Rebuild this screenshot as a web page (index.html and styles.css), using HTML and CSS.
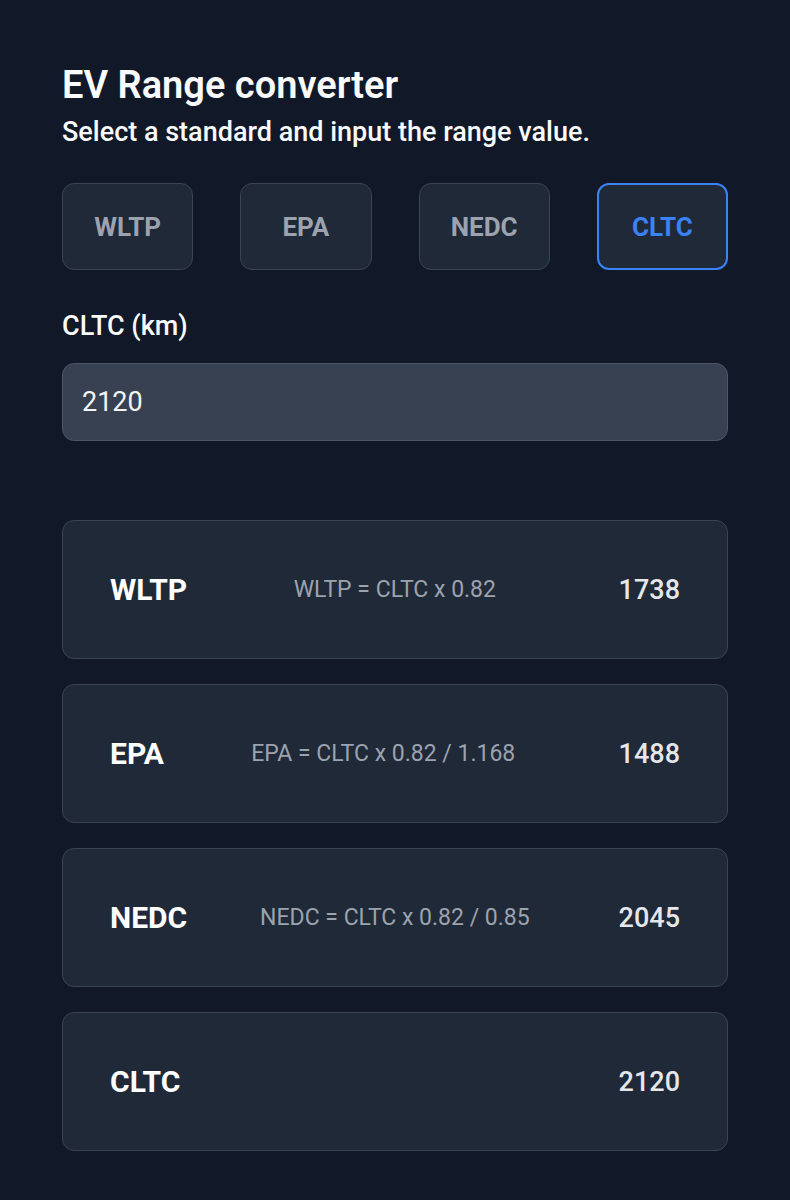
FILE: index.html
```html
<!DOCTYPE html>
<html lang="en">
<head>
  <meta charset="UTF-8" />
  <title>EV Range converter</title>
  <link rel="stylesheet" href="styles.css">
</head>
<body>
  <div class="container">
    <h1>EV Range converter</h1>
    <p class="subtitle">Select a standard and input the range value.</p>

    <div class="standards">
      <button class="std">WLTP</button>
      <button class="std">EPA</button>
      <button class="std">NEDC</button>
      <button class="std active">CLTC</button>
    </div>

    <label class="field-label" for="range">CLTC (km)</label>
    <input id="range" class="range-input" type="text" value="2120">

    <div class="results">
      <div class="card">
        <span class="card-name">WLTP</span>
        <span class="card-formula">WLTP = CLTC x 0.82</span>
        <span class="card-value">1738</span>
      </div>
      <div class="card">
        <span class="card-name">EPA</span>
        <span class="card-formula">EPA = CLTC x 0.82 / 1.168</span>
        <span class="card-value">1488</span>
      </div>
      <div class="card">
        <span class="card-name">NEDC</span>
        <span class="card-formula">NEDC = CLTC x 0.82 / 0.85</span>
        <span class="card-value">2045</span>
      </div>
      <div class="card">
        <span class="card-name">CLTC</span>
        <span class="card-formula"></span>
        <span class="card-value">2120</span>
      </div>
    </div>
  </div>
</body>
</html>
```

FILE: styles.css
```css
body {
  margin: 0;
  background: #111827;
  color: #f9fafb;
  font-family: Roboto, "Noto Sans", sans-serif;
}
.container {
  padding: 61px 62px 40px;
}
h1 {
  margin: 0;
  font-size: 38px;
  font-weight: 600;
  line-height: 48px;
}
.subtitle {
  margin: 5px 0 0;
  font-size: 27px;
  font-weight: 500;
  line-height: 36px;
}
.standards {
  display: grid;
  grid-template-columns: repeat(4, 1fr);
  gap: 47px;
  margin-top: 33px;
}
.std {
  height: 87px;
  background: #1f2937;
  border: 1.5px solid #3b4453;
  border-radius: 12px;
  color: #9ca3af;
  font-family: inherit;
  font-size: 26px;
  font-weight: 700;
}
.std.active {
  border: 2px solid #3b82f6;
  color: #3b82f6;
}
.field-label {
  display: block;
  margin-top: 39px;
  font-size: 27px;
  font-weight: 500;
  line-height: 34px;
}
.range-input {
  display: block;
  box-sizing: border-box;
  width: 100%;
  height: 78px;
  margin-top: 20px;
  padding: 0 19px;
  background: #374151;
  border: 1.5px solid #4b5563;
  border-radius: 12px;
  color: #f3f4f6;
  font-family: inherit;
  font-size: 27px;
}
.results {
  display: flex;
  flex-direction: column;
  gap: 25px;
  margin-top: 79px;
}
.card {
  display: flex;
  align-items: center;
  height: 139px;
  box-sizing: border-box;
  padding: 0 47px;
  background: #1f2937;
  border: 1.5px solid #3b4453;
  border-radius: 12px;
}
.card-name {
  font-size: 30px;
  font-weight: 700;
  color: #fff;
}
.card-formula {
  flex: 1;
  margin-right: 16px;
  text-align: center;
  font-size: 23px;
  color: #9ca3af;
}
.card-value {
  font-size: 27px;
  font-weight: 500;
  color: #e5e7eb;
}
```
